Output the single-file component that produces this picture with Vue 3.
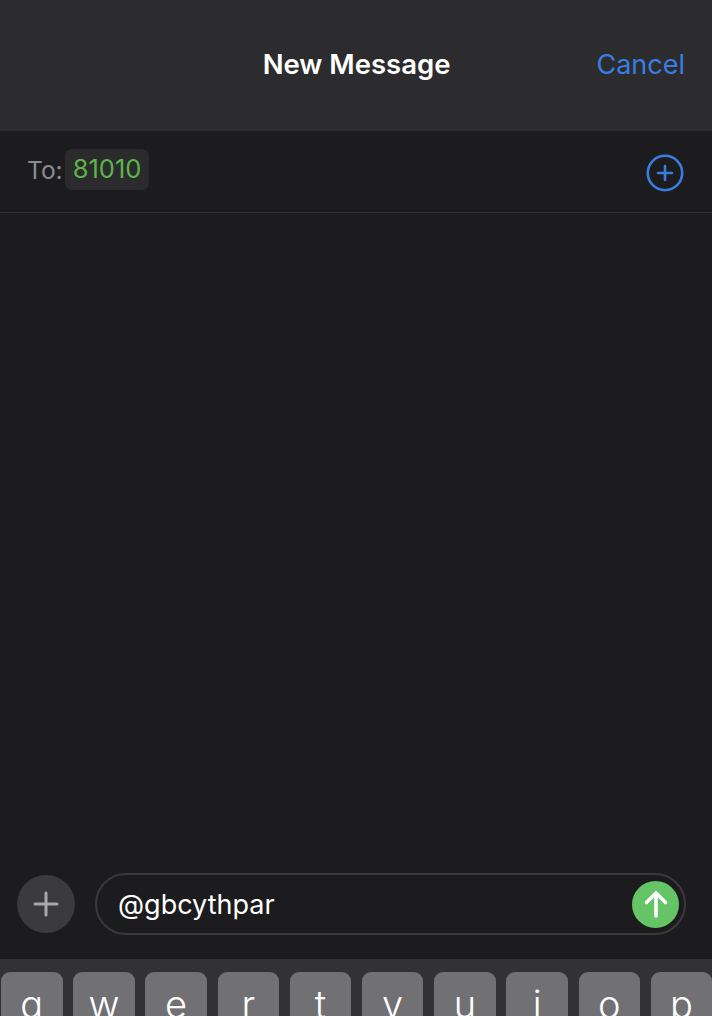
<script setup>
const keys = ['q', 'w', 'e', 'r', 't', 'y', 'u', 'i', 'o', 'p']
</script>

<template>
  <div class="screen">
    <header class="nav">
      <div class="nav-title">New Message</div>
      <div class="nav-cancel">Cancel</div>
    </header>

    <div class="to-row">
      <span class="to-label">To:</span>
      <span class="chip">81010</span>
      <svg class="add-contact" width="38" height="38" viewBox="0 0 38 38" fill="none">
        <circle cx="19" cy="19" r="17.2" stroke="#3a7de0" stroke-width="2.6" />
        <path d="M19 12v14M12 19h14" stroke="#3a7de0" stroke-width="2.6" stroke-linecap="round" />
      </svg>
    </div>

    <main class="thread"></main>

    <div class="composer">
      <div class="apps-btn">
        <svg width="26" height="26" viewBox="0 0 26 26" fill="none">
          <path d="M13 2v22M2 13h22" stroke="#a8a8ac" stroke-width="3" stroke-linecap="round" />
        </svg>
      </div>
      <div class="field">
        <span class="field-text">@gbcythpar</span>
        <div class="send">
          <svg width="26" height="30" viewBox="0 0 26 30" fill="none">
            <path d="M13 27V4M3.500 13.500 13 4l9.500 9.500" stroke="#fff" stroke-width="3.600" stroke-linecap="round" stroke-linejoin="round" />
          </svg>
        </div>
      </div>
    </div>

    <div class="keyboard">
      <div v-for="k in keys" :key="k" class="key">{{ k }}</div>
    </div>
  </div>
</template>

<style>
html,
body {
  margin: 0;
  background: #1c1c1e;
}
</style>

<style scoped>
.screen {
  width: 712px;
  height: 1016px;
  overflow: hidden;
  display: flex;
  flex-direction: column;
  background: #1c1c1e;
  font-family: Inter, 'Liberation Sans', sans-serif;
}
.nav {
  flex: 0 0 131px;
  box-sizing: border-box;
  padding: 0 27px 3px 0;
  display: flex;
  align-items: center;
  justify-content: flex-end;
  background: #2c2c2e;
}
.nav-title {
  margin-right: 146px;
  color: #fff;
  font-size: 27.500px;
  font-weight: 600;
}
.nav-cancel {
  color: #3a7de0;
  font-size: 27px;
}
.to-row {
  flex: 0 0 82px;
  box-sizing: border-box;
  padding: 0 28px 4px 27px;
  display: flex;
  align-items: center;
  border-bottom: 1px solid #303032;
}
.to-label {
  color: #8c8c90;
  font-size: 24.500px;
}
.chip {
  margin-left: 2px;
  padding: 0 8px;
  height: 41px;
  line-height: 40px;
  border-radius: 7px;
  background: #2b2b2d;
  color: #5cb548;
  font-size: 25.500px;
}
.add-contact {
  margin-left: auto;
  margin-top: 6px;
}
.thread {
  flex: 1 1 auto;
}
.composer {
  flex: 0 0 auto;
  padding: 0 26px 24px 17px;
  display: flex;
  align-items: center;
  gap: 20px;
}
.apps-btn {
  flex: 0 0 58px;
  height: 58px;
  border-radius: 50%;
  background: #3b3b3f;
  display: flex;
  align-items: center;
  justify-content: center;
}
.field {
  flex: 1 1 auto;
  box-sizing: border-box;
  height: 62px;
  padding: 0 5px 0 21px;
  display: flex;
  align-items: center;
  justify-content: space-between;
  border: 2px solid #3a3a3c;
  border-radius: 31px;
}
.field-text {
  color: #fff;
  font-size: 27px;
}
.send {
  width: 47px;
  height: 47px;
  border-radius: 50%;
  background: #65c466;
  display: flex;
  align-items: center;
  justify-content: center;
}
.keyboard {
  flex: 0 0 57px;
  box-sizing: border-box;
  padding: 13px 0 0 1px;
  display: flex;
  gap: 10.700px;
  overflow: hidden;
  background: #323234;
}
.key {
  flex: 0 0 61.500px;
  height: 84px;
  border-radius: 9px;
  background: #717173;
  color: #fff;
  font-size: 38px;
  font-weight: 300;
  line-height: 64px;
  text-align: center;
}
</style>
